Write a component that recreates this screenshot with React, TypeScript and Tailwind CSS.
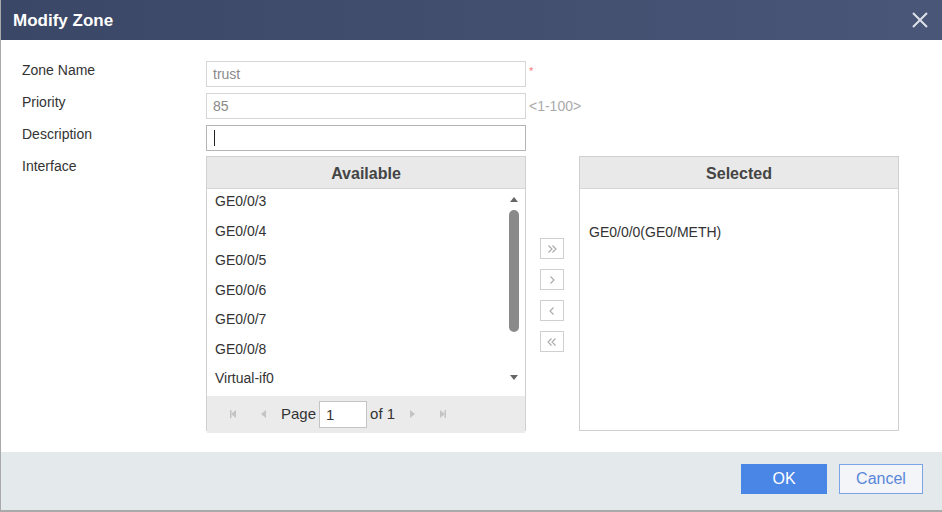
import React from 'react';

const font = { fontFamily: '"Liberation Sans", Arial, sans-serif' };

const available = ['GE0/0/3', 'GE0/0/4', 'GE0/0/5', 'GE0/0/6', 'GE0/0/7', 'GE0/0/8', 'Virtual-if0'];

const Tri: React.FC<{ dir: 'up' | 'down' | 'left' | 'right'; bar?: boolean; color: string }> = ({ dir, bar, color }) => {
  const pts: Record<string, string> = {
    up: '1,7 5,2 9,7',
    down: '1,3 5,8 9,3',
    left: '7,1 2,5 7,9',
    right: '3,1 8,5 3,9',
  };
  return (
    <svg width="10" height="10" viewBox="0 0 10 10">
      <polygon points={pts[dir]} fill={color} />
      {bar && dir === 'left' && <rect x="1" y="1" width="1.5" height="8" fill={color} />}
      {bar && dir === 'right' && <rect x="7.5" y="1" width="1.5" height="8" fill={color} />}
    </svg>
  );
};

// chevron paths for the move buttons
const chevrons: Record<string, string> = {
  addAll: 'M2.5 1.5 L6 5 L2.5 8.5 M6.5 1.5 L10 5 L6.5 8.5',
  add: 'M4.5 1.5 L8 5 L4.5 8.5',
  remove: 'M7.5 1.5 L4 5 L7.5 8.5',
  removeAll: 'M9.5 1.5 L6 5 L9.5 8.5 M5.5 1.5 L2 5 L5.5 8.5',
};

const MoveBtn: React.FC<{ kind: string }> = ({ kind }) => (
  <div className="w-[24px] h-[21px] border border-[#cfcfcf] bg-white flex items-center justify-center">
    <svg width="12" height="10" viewBox="0 0 12 10">
      <path d={chevrons[kind]} stroke="#a8a8a8" strokeWidth="1.1" fill="none" />
    </svg>
  </div>
);

const App: React.FC = () => {
  return (
    <div className="w-[942px] h-[512px] flex flex-col bg-white border-l border-[#a9a9a9] border-b-2 border-b-[#a9a9a9] overflow-hidden" style={font}>
      <div className="h-[40px] shrink-0 flex items-center justify-between pl-[12px] pr-[12px] pt-[2px] bg-gradient-to-r from-[#3b4766] to-[#4a5677]">
        <span className="text-white font-bold text-[17px]">Modify Zone</span>
        <svg width="18" height="18" viewBox="0 0 18 18" className="mr-[1px] -mt-[2px]">
          <path d="M2 2 L16 16 M16 2 L2 16" stroke="#dde1ea" strokeWidth="2" />
        </svg>
      </div>

      <div className="flex-1 pt-[21px] pl-[21px] text-[14px] text-[#333]">
        <div className="flex items-start h-[26px]">
          <div className="w-[184px] leading-[18px]">Zone Name</div>
          <div className="w-[320px] h-[26px] border border-[#d6d6d6] px-[6px] flex items-center text-[#8a8a8a]">trust</div>
          <span className="ml-[3px] text-[#f07a7a] text-[11px] mt-[2px]">*</span>
        </div>
        <div className="flex items-start h-[26px] mt-[6px]">
          <div className="w-[184px] leading-[18px]">Priority</div>
          <div className="w-[320px] h-[26px] border border-[#d6d6d6] px-[6px] flex items-center text-[#8a8a8a]">85</div>
          <span className="ml-[3px] text-[#aaa] text-[14px] leading-[26px]">&lt;1-100&gt;</span>
        </div>
        <div className="flex items-start h-[26px] mt-[6px]">
          <div className="w-[184px] leading-[18px]">Description</div>
          <div className="w-[320px] h-[26px] border border-[#b5b5b5] px-[7px] flex items-center">
            <div className="w-[1px] h-[16px] bg-[#222]" />
          </div>
        </div>
        <div className="flex mt-[5px]">
          <div className="w-[184px] leading-[18px] pt-[1px]">Interface</div>
          <div className="flex h-[275px]">
            <div className="w-[320px] border border-[#d0d0d0] flex flex-col">
              <div className="h-[32px] shrink-0 bg-[#e9e9e9] border-b border-[#d6d6d6] flex items-center justify-center pt-[2px] font-bold text-[#444] text-[16px]">Available</div>
              <div className="flex-1 flex relative">
                <div className="flex-1 pl-[8px]">
                  {available.map((a) => (
                    <div key={a} className="h-[29.5px] leading-[24px]">{a}</div>
                  ))}
                </div>
                <div className="w-[16px] mr-[3px] flex flex-col items-center pt-[6px]">
                  <Tri dir="up" color="#666" />
                  <div className="w-[10px] h-[122px] mt-[5px] rounded-full bg-[#8a8a8a]" />
                  <div className="mt-[40px]">
                    <Tri dir="down" color="#666" />
                  </div>
                </div>
              </div>
              <div className="h-[37px] shrink-0 bg-[#ebebeb] flex items-center pl-[22px] text-[15px]">
                <Tri dir="left" bar color="#c4c4c4" />
                <div className="ml-[20px]"><Tri dir="left" color="#c4c4c4" /></div>
                <span className="ml-[12px]">Page</span>
                <div className="ml-[3px] w-[48px] h-[27px] bg-white border border-[#c4c4c4] flex items-center pl-[6px] pt-[3px]">1</div>
                <span className="ml-[3px]">of 1</span>
                <div className="ml-[12px]"><Tri dir="right" color="#c4c4c4" /></div>
                <div className="ml-[20px]"><Tri dir="right" bar color="#c4c4c4" /></div>
              </div>
            </div>
            <div className="w-[53px] flex flex-col items-center pt-[82px] gap-[10px] pr-[2px]">
              <MoveBtn kind="addAll" />
              <MoveBtn kind="add" />
              <MoveBtn kind="remove" />
              <MoveBtn kind="removeAll" />
            </div>
            <div className="w-[320px] border border-[#d0d0d0] flex flex-col">
              <div className="h-[32px] shrink-0 bg-[#e9e9e9] border-b border-[#d6d6d6] flex items-center justify-center pt-[2px] font-bold text-[#444] text-[16px]">Selected</div>
              <div className="flex-1 pl-[9px] pt-[33px]">GE0/0/0(GE0/METH)</div>
            </div>
          </div>
        </div>
      </div>

      <div className="h-[58px] shrink-0 bg-[#e4e9ec] flex items-start justify-end pr-[19px] gap-[12px] pt-[12px]">
        <button className="w-[86px] h-[30px] bg-[#4a86e6] text-white text-[16px]">OK</button>
        <button className="w-[84px] h-[30px] border border-[#7aa3e8] bg-[#f3f5f8] text-[#5a87d8] text-[16px]">Cancel</button>
      </div>
    </div>
  );
};

export default App;
